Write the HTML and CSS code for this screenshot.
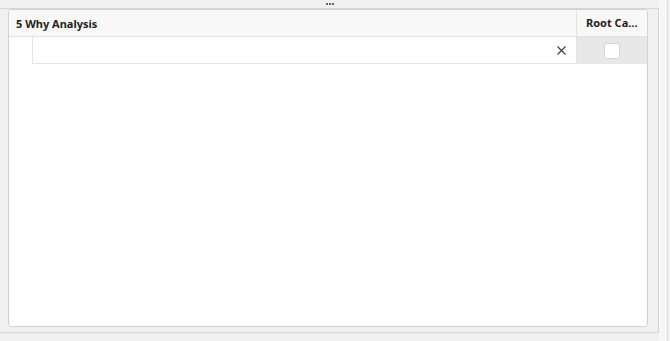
FILE: index.html
```html
<!DOCTYPE html>
<html>
<head>
<title>5 Why Analysis</title>
<link rel="stylesheet" href="styles.css">
</head>
<body>
	<div class="page">
		<div class="shell">
			<div class="grip"><span></span><span></span><span></span></div>
			<div class="frame">
				<div class="grid">
					<div class="grid-head">
						<div class="col col-main">5 Why Analysis</div>
						<div class="col col-root">Root Cause</div>
					</div>
					<div class="grid-row">
						<div class="indent"></div>
						<div class="cell cell-main">
							<svg class="clear" width="9" height="9" viewBox="0 0 9 9">
								<path d="M0.5 0.5 L8.5 8.5 M8.5 0.5 L0.5 8.5" stroke="#3a3a3a" stroke-width="1.1" fill="none"/>
							</svg>
						</div>
						<div class="cell cell-root"><span class="check"></span></div>
					</div>
				</div>
			</div>
		</div>
		<div class="side"></div>
	</div>
</body>
</html>
```
FILE: styles.css
```css
* {
	box-sizing: border-box;
}
body {
	margin: 0;
	background-color: #f0f0f0;
	font-family: "Noto Sans", "Open Sans", sans-serif;
	color: #222;
}
.page {
	display: flex;
	height: 341px;
}
.shell {
	width: 659px;
	flex: none;
}
.grip {
	height: 8px;
	display: flex;
	justify-content: center;
	align-items: center;
	gap: 1px;
	padding-left: 0px;
}
.grip span {
	width: 2px;
	height: 2px;
	background-color: #666;
}
.frame {
	border-top: 1px solid #d6d6d6;
	border-right: 1px solid #d6d6d6;
	border-bottom: 1px solid #d6d6d6;
	padding: 0 10px 5px 8px;
}
.grid {
	height: 318px;
	background-color: #fff;
	border: 1px solid #d2d2d2;
	border-radius: 3px;
	overflow: hidden;
}
.grid-head {
	display: flex;
	height: 27px;
	background-color: #f8f8f8;
	border-bottom: 1px solid #e2e2e2;
	font-size: 11px;
	font-weight: bold;
}
.col {
	display: flex;
	align-items: center;
	white-space: nowrap;
	overflow: hidden;
	text-overflow: ellipsis;
}
.col-main {
	flex: 1;
	padding-left: 7px;
	border-right: 1px solid #e2e2e2;
}
.col-root {
	width: 70px;
	padding: 0 6px 0 9px;
	display: block;
	line-height: 26px;
}
.grid-row {
	display: flex;
	height: 27px;
}
.indent {
	width: 23px;
}
.cell-main {
	flex: 1;
	border-left: 1px solid #e4e4e4;
	border-bottom: 1px solid #e4e4e4;
	border-right: 1px solid #e4e4e4;
	display: flex;
	align-items: center;
	justify-content: flex-end;
	padding-right: 10px;
}
.cell-root {
	width: 70px;
	background-color: #e8e8e8;
	display: flex;
	align-items: center;
	justify-content: center;
}
.check {
	width: 16px;
	height: 16px;
	background-color: #fff;
	border: 1px solid #d4d4d4;
	border-radius: 3px;
}
.side {
	flex: 1;
	background-color: #f7f7f7;
	border-right: 1px solid #dcdcdc;
	margin-right: 2px;
}
```
